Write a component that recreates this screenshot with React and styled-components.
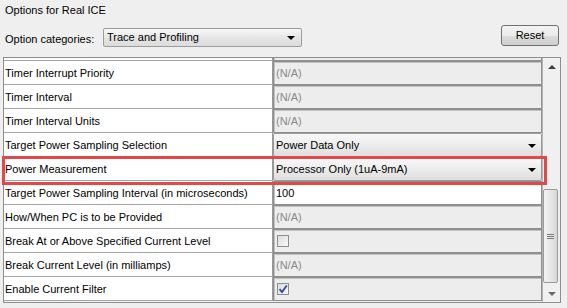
import React from 'react';
import styled, { createGlobalStyle } from 'styled-components';

const GlobalStyle = createGlobalStyle`
  html, body {
    margin: 0;
    padding: 0;
    background: #efefef;
  }
  body {
    font-family: "Liberation Sans", Arial, sans-serif;
    font-size: 11px;
    color: #000;
  }
`;

const Page = styled.div`
  width: 567px;
  height: 308px;
  box-sizing: border-box;
  padding: 3px 6px 0 3px;
  overflow: hidden;
`;

const Title = styled.div`
  padding-left: 2px;
  line-height: 14px;
  height: 14px;
`;

const Toolbar = styled.div`
  display: flex;
  align-items: flex-start;
  margin-top: 8px;
  height: 22px;
`;

const Label = styled.div`
  width: 98px;
  padding-left: 2px;
  margin-top: 8px;
  line-height: 13px;
`;

const Select = styled.div`
  position: relative;
  width: 199px;
  height: 19px;
  margin-top: 3px;
  box-sizing: border-box;
  border: 1px solid #9c9c9c;
  border-radius: 2px;
  background: linear-gradient(#f8f8f8, #e6e6e6 50%, #dcdcdc);
  display: flex;
  align-items: center;
  padding: 0 4px 2px 3px;
`;

const Arrow = styled.span`
  margin-left: auto;
  width: 0;
  height: 0;
  border-left: 4px solid transparent;
  border-right: 4px solid transparent;
  border-top: 4px solid #000;
  margin-right: 2px;
  margin-top: 3px;
`;

const ScrollArrow = styled.span`
  width: 0;
  height: 0;
  border-left: 4px solid transparent;
  border-right: 4px solid transparent;
  ${(p) =>
    p.down
      ? 'border-top: 4px solid #6a6a6a;'
      : 'border-bottom: 4px solid #3c3c3c;'}
`;

const ResetButton = styled.button`
  margin-left: auto;
  margin-right: 2px;
  width: 58px;
  height: 21px;
  border: 1px solid #707070;
  border-radius: 3px;
  background: linear-gradient(#f3f3f3, #ebebeb 50%, #dddddd 51%, #cfcfcf);
  font-family: inherit;
  font-size: 11px;
  color: #000;
  padding: 0 0 2px;
`;

const Frame = styled.div`
  position: relative;
  margin-top: 10px;
  width: 558px;
  height: 246px;
  box-sizing: border-box;
  border: 1px solid #8e8e8e;
  display: grid;
  grid-template-columns: 1fr 18px;
`;

const Viewport = styled.div`
  overflow: hidden;
  height: 244px;
`;

/* list is scrolled: only the last 3px of the row above show */
const List = styled.div`
  margin-top: -21px;
`;

const Row = styled.div`
  display: grid;
  grid-template-columns: 269px 1fr;
  height: 24px;
`;

const NameCell = styled.div`
  background: #fff;
  border-right: 1px solid #9a9a9a;
  border-bottom: 1px solid #a6a6a6;
  padding-left: 1px;
  display: flex;
  align-items: center;
  white-space: nowrap;
`;

const ValueCell = styled.div`
  box-sizing: border-box;
  height: 24px;
  border: 1px solid #8f8f8f;
  box-shadow: inset 1px 1px 0 #c2c2c2;
  background: ${(p) => (p.white ? '#fff' : '#ededed')};
  color: ${(p) => (p.muted ? '#8a8a8a' : '#000')};
  display: flex;
  align-items: center;
  padding: 0 8px 1px 2px;
`;

const DropCell = styled.div`
  box-sizing: border-box;
  height: 24px;
  border: 1px solid #9a9a9a;
  border-radius: 2px;
  background: linear-gradient(#f9f9f9, #ececec 50%, #dedede);
  display: flex;
  align-items: center;
  padding: 0 3px 1px 2px;
`;

const Check = styled.span`
  width: 12px;
  height: 12px;
  box-sizing: border-box;
  margin-left: 1px;
  border: 1px solid #8e8e8e;
  background: linear-gradient(135deg, #dcdcdc, #f8f8f8);
  display: flex;
  align-items: center;
  justify-content: center;
`;

const ScrollBar = styled.div`
  border-left: 1px solid #b4b4b4;
  background: #f0f0f0;
  display: flex;
  flex-direction: column;
`;

const ScrollButton = styled.div`
  height: 17px;
  display: flex;
  align-items: center;
  justify-content: center;
`;

const Track = styled.div`
  flex: 1;
  padding-top: 114px;
`;

const Thumb = styled.div`
  width: 15px;
  height: 94px;
  box-sizing: border-box;
  border: 1px solid #9a9a9a;
  border-radius: 2px;
  background: linear-gradient(90deg, #f2f2f2, #e4e4e4 60%, #d6d6d6);
  display: flex;
  flex-direction: column;
  align-items: center;
  justify-content: center;
  gap: 1px;
`;

const Grip = styled.span`
  width: 7px;
  height: 1px;
  background: #7a7a7a;
`;

const Highlight = styled.div`
  position: absolute;
  left: -2px;
  top: 98px;
  width: 545px;
  height: 29px;
  box-sizing: border-box;
  border: 3px solid #e34848;
  pointer-events: none;
`;

const rows = [
  { id: 'above', name: '', type: 'blank' },
  { name: 'Timer Interrupt Priority', type: 'na' },
  { name: 'Timer Interval', type: 'na' },
  { name: 'Timer Interval Units', type: 'na' },
  { name: 'Target Power Sampling Selection', type: 'select', value: 'Power Data Only' },
  { name: 'Power Measurement', type: 'select', value: 'Processor Only (1uA-9mA)' },
  { name: 'Target Power Sampling Interval (in microseconds)', type: 'text', value: '100' },
  { name: 'How/When PC is to be Provided', type: 'na' },
  { name: 'Break At or Above Specified Current Level', type: 'check', checked: false },
  { name: 'Break Current Level (in milliamps)', type: 'na' },
  { name: 'Enable Current Filter', type: 'check', checked: true },
];

function Value({ row }) {
  if (row.type === 'blank') {
    return <ValueCell />;
  }
  if (row.type === 'select') {
    return (
      <DropCell>
        {row.value}
        <Arrow />
      </DropCell>
    );
  }
  if (row.type === 'text') {
    return <ValueCell white>{row.value}</ValueCell>;
  }
  if (row.type === 'check') {
    return (
      <ValueCell>
        <Check>
          {row.checked && (
            <svg width="10" height="10" viewBox="0 0 10 10">
              <path d="M1.5 5.2 L4 8 L8.8 1.5" fill="none" stroke="#2c47a8" strokeWidth="1.8" />
            </svg>
          )}
        </Check>
      </ValueCell>
    );
  }
  return <ValueCell muted>(N/A)</ValueCell>;
}

export default function App() {
  return (
    <Page>
      <GlobalStyle />
      <Title>Options for Real ICE</Title>
      <Toolbar>
        <Label>Option categories:</Label>
        <Select>
          Trace and Profiling
          <Arrow />
        </Select>
        <ResetButton>Reset</ResetButton>
      </Toolbar>
      <Frame>
        <Viewport>
          <List>
            {rows.map((row) => (
              <Row key={row.id || row.name}>
                <NameCell>{row.name}</NameCell>
                <Value row={row} />
              </Row>
            ))}
          </List>
        </Viewport>
        <ScrollBar>
          <ScrollButton>
            <ScrollArrow />
          </ScrollButton>
          <Track>
            <Thumb>
              <Grip />
              <Grip />
              <Grip />
            </Thumb>
          </Track>
          <ScrollButton>
            <ScrollArrow down />
          </ScrollButton>
        </ScrollBar>
        <Highlight />
      </Frame>
    </Page>
  );
}
